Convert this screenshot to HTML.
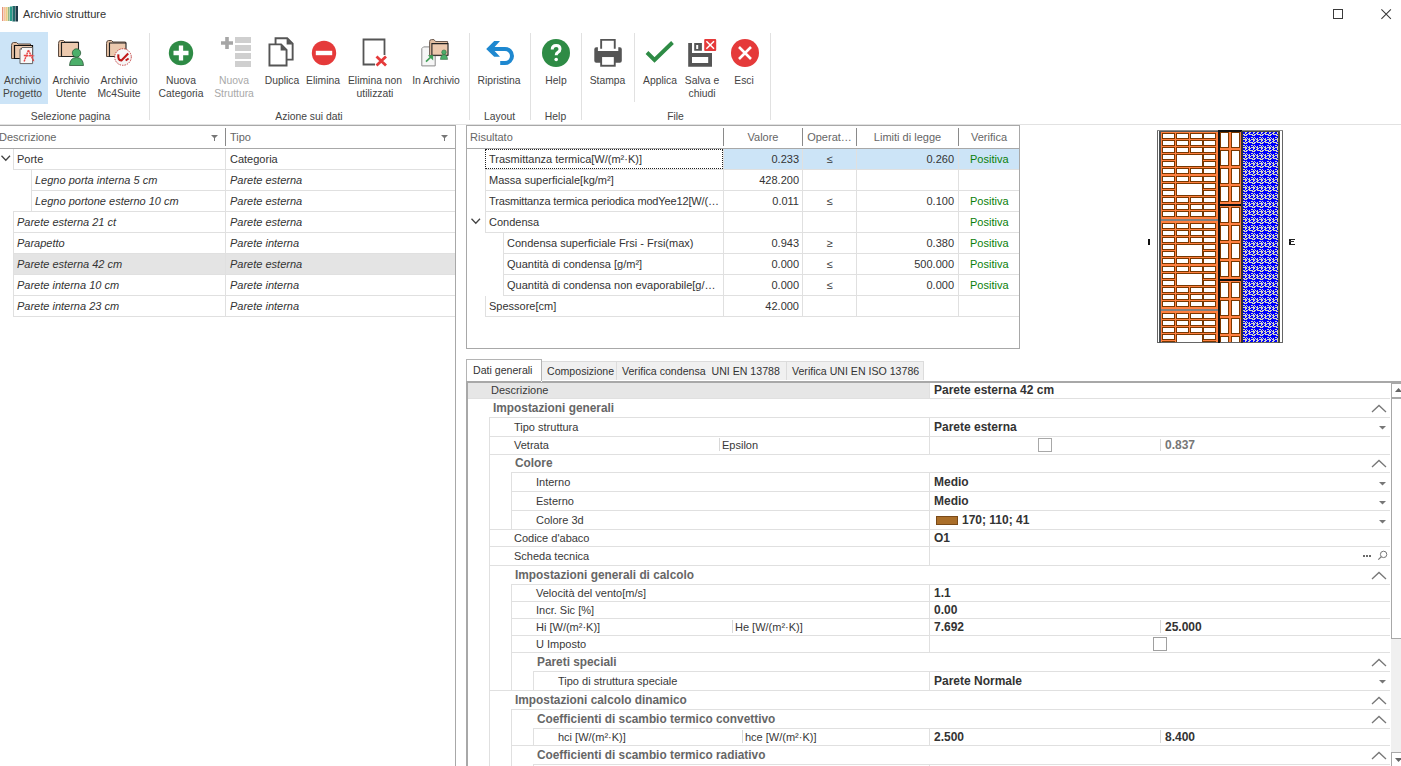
<!DOCTYPE html>
<html><head><meta charset="utf-8">
<style>
*{box-sizing:border-box;margin:0;padding:0}
html,body{width:1401px;height:766px;overflow:hidden;background:#fff}
body{position:relative;font-family:"Liberation Sans",sans-serif;font-size:11px;color:#333}
.a{position:absolute;white-space:nowrap}
.hl{position:absolute;height:1px}
.vl{position:absolute;width:1px}
.rb{position:absolute;text-align:center;line-height:13px;color:#444;transform:scaleX(0.94)}
.grp{position:absolute;text-align:center;color:#444;top:110px;line-height:13px;transform:scaleX(0.94)}
.sep{position:absolute;width:1px;background:#e1e1e1;top:33px}
</style></head><body>

<!-- TITLE BAR -->
<svg class="a" style="left:0px;top:0px" width="20" height="24" viewBox="0 0 20 24">
<rect x="2" y="7" width="1.4" height="14" fill="#e08060" opacity="0.85"/>
<rect x="4.2" y="7" width="1.4" height="14" fill="#f0a868" opacity="0.85"/>
<rect x="6" y="7" width="1.7" height="14" fill="#e8c878" opacity="0.9"/>
<rect x="8.1" y="7" width="1.4" height="14" fill="#88b078"/>
<rect x="9.9" y="6.5" width="2.1" height="14.5" fill="#2a9a88"/>
<rect x="12.4" y="6" width="2.6" height="15.5" fill="#1f6868"/>
<rect x="15.4" y="6" width="2.6" height="15.5" fill="#1e3a48"/>
</svg>
<div class="a" style="left:23px;top:8px;font-size:11.1px;color:#333">Archivio strutture</div>
<div class="a" style="left:1333px;top:9px;width:10px;height:10px;border:1px solid #3a3a3a"></div>
<svg class="a" style="left:1381px;top:9px" width="11" height="11"><path d="M0.4 0.4L9.9 9.9M9.9 0.4L0.4 9.9" stroke="#3a3a3a" stroke-width="1.05"/></svg>


<!-- RIBBON -->
<div class="a" style="left:0;top:32px;width:48px;height:72px;background:#cce4f7"></div>
<!-- Archivio Progetto icon -->
<svg class="a" style="left:10px;top:40px" width="26" height="26" viewBox="0 0 26 26">
<path d="M1.5 5.5 Q1.5 2.5 3.5 2.5 H6.5 L8 4 H20.5 V18.5 H1.5Z" fill="#e3bfa2" stroke="#5a4a40" stroke-width="1"/>
<path d="M4.5 5.5 H22.5 V18.5 H4.5Z" fill="#ecc9ae" stroke="#111" stroke-width="1.2"/>
<path d="M12 7.5 H22.6 V23.6 H10 V9.5Z" fill="#f8f8f8" stroke="#666" stroke-width="1"/><path d="M10 9.5 L12 7.5 V9.5Z" fill="#555"/>
<path d="M18.4 10.2 L14.1 21.5 M18.4 10.2 L23.9 21.5 M13.8 15.5 L24.2 15.8" stroke="#e84848" stroke-width="1.5" stroke-dasharray="2 0.5" fill="none"/>
</svg>
<!-- Archivio Utente icon -->
<svg class="a" style="left:57px;top:39px" width="28" height="28" viewBox="0 0 28 28">
<path d="M1.5 4.5 Q1.5 1.5 3.5 1.5 H6.5 L8 3 H21.5 V17.5 H1.5Z" fill="#e3bfa2" stroke="#5a4a40" stroke-width="1"/>
<path d="M4.5 3.5 H21.5 V17.5 H4.5Z" fill="#ecc9ae" stroke="#222" stroke-width="1.1"/>
<circle cx="19.5" cy="14" r="4.2" fill="#4caf6a" stroke="#2d5a3a" stroke-width="0.8"/>
<path d="M12.5 26.5 Q13 18.5 19.5 18.5 Q26 18.5 26.5 26.5Z" fill="#4caf6a" stroke="#2d5a3a" stroke-width="0.8"/>
</svg>
<!-- Mc4Suite icon -->
<svg class="a" style="left:105px;top:39px" width="28" height="28" viewBox="0 0 28 28">
<path d="M1.5 4.5 Q1.5 1.5 3.5 1.5 H6.5 L8 3 H20.5 V17.5 H1.5Z" fill="#e3bfa2" stroke="#5a4a40" stroke-width="1"/>
<path d="M4.5 4 H21 V17.5 H4.5Z" fill="#ecc9ae" stroke="#222" stroke-width="1.1"/>
<circle cx="18" cy="18" r="8.3" fill="#f6f6f6" stroke="#c03030" stroke-width="0.9" stroke-dasharray="1.5 1"/>
<path d="M13.4 15.4 Q12.6 21.6 16.4 21.4 L23.2 14.6" stroke="#c01818" stroke-width="2.1" fill="none"/><path d="M20.6 21.6 L23.6 19.4" stroke="#c01818" stroke-width="1.9" fill="none"/>
</svg>
<div class="rb" style="left:-1px;top:74px;width:47px">Archivio<br>Progetto</div>
<div class="rb" style="left:48px;top:74px;width:46px">Archivio<br>Utente</div>
<div class="rb" style="left:94px;top:74px;width:50px">Archivio<br>Mc4Suite</div>
<div class="grp" style="left:0;width:141px">Selezione pagina</div>
<div class="sep" style="left:149px;height:87px"></div>

<!-- Nuova Categoria -->
<svg class="a" style="left:168px;top:40px" width="26" height="26" viewBox="0 0 26 26">
<circle cx="13" cy="13" r="12.2" fill="#2e8b45"/>
<path d="M13 5.5V20.5M5.5 13H20.5" stroke="#fff" stroke-width="4.3"/>
</svg>
<!-- Nuova Struttura -->
<svg class="a" style="left:220px;top:36px" width="33" height="32" viewBox="0 0 33 32">
<path d="M7 1V13M1 7H13" stroke="#a6a6a6" stroke-width="3.6"/>
<rect x="15" y="1" width="16" height="6" fill="#cfcfcf"/>
<rect x="15" y="9" width="16" height="6" fill="#cfcfcf"/>
<rect x="15" y="17" width="16" height="6" fill="#cfcfcf"/>
<rect x="15" y="25" width="16" height="6" fill="#cfcfcf"/>
</svg>
<!-- Duplica -->
<svg class="a" style="left:260px;top:34px" width="40" height="36" viewBox="0 0 40 36">
<path d="M15.55 4.25 H27.2 L32.65 9.7 V25.65 H15.55Z" fill="#fff" stroke="#555" stroke-width="1.9"/>
<path d="M26.6 4.25 V10.6 H32.65Z" fill="#555"/>
<path d="M9.45 10.35 H21.1 L26.55 15.8 V31.45 H9.45Z" fill="#fff" stroke="#555" stroke-width="1.9"/>
<path d="M20.6 10.35 V16.5 H26.55Z" fill="#555"/>
</svg>
<!-- Elimina -->
<svg class="a" style="left:311px;top:40px" width="26" height="26" viewBox="0 0 26 26">
<circle cx="13" cy="13" r="12.2" fill="#e53a3a"/>
<rect x="4.8" y="10.8" width="16.4" height="4.4" fill="#fff"/>
</svg>
<!-- Elimina non utilizzati -->
<svg class="a" style="left:362px;top:38px" width="27" height="30" viewBox="0 0 27 30">
<path d="M13 26.5H1.5V1.5H22.5V17" fill="none" stroke="#555" stroke-width="1.8"/>
<path d="M14.5 18.5L24 27.5M24 18.5L14.5 27.5" stroke="#e53a3a" stroke-width="2.8"/>
</svg>
<!-- In Archivio -->
<svg class="a" style="left:415px;top:34px" width="40" height="36" viewBox="0 0 40 36">
<path d="M8.5 12.9 H20.2 V31.9 H6.8 V14.6Z" fill="#f6f6f6" stroke="#8a8a8a" stroke-width="1"/>
<path d="M14.6 21.6 V7.5 Q14.6 5.6 16.5 5.6 H19 L20.5 7.5 H32.6 V21.6Z" fill="#e3bfa2" stroke="#6a5a50" stroke-width="1"/>
<path d="M16.9 9.6 H33 V21.3 H16.9Z" fill="#ecc9ae" stroke="#222" stroke-width="1.1"/>
<circle cx="29" cy="18.2" r="2.3" fill="#4caf6a" stroke="#2d5a3a" stroke-width="0.5"/>
<path d="M25.4 25.4 Q25.8 20.6 29 20.6 Q32.2 20.6 32.6 25.4Z" fill="#4caf6a" stroke="#2d5a3a" stroke-width="0.5"/>
<path d="M11 27.6 L16.8 22.2" stroke="#3e9e56" stroke-width="1.6"/>
<path d="M12.8 21.3 H18.2 V26.5Z" fill="#3e9e56"/>
</svg>
<div class="rb" style="left:156px;top:74px;width:50px">Nuova<br>Categoria</div>
<div class="rb" style="left:208px;top:74px;width:52px;color:#a8a8a8">Nuova<br>Struttura</div>
<div class="rb" style="left:262px;top:74px;width:40px">Duplica</div>
<div class="rb" style="left:304px;top:74px;width:38px">Elimina</div>
<div class="rb" style="left:344px;top:74px;width:62px">Elimina non<br>utilizzati</div>
<div class="rb" style="left:408px;top:74px;width:56px">In Archivio</div>
<div class="grp" style="left:149px;width:320px">Azione sui dati</div>
<div class="sep" style="left:469px;height:87px"></div>

<!-- Ripristina -->
<svg class="a" style="left:480px;top:36px" width="40" height="34" viewBox="0 0 40 34">
<path d="M6.2 13 L14.2 5.1 H20 L14.6 10.9 H25 A9 9 0 0 1 25 28.9 H20.2 V25.1 H25 A5 5 0 0 0 25 15.1 H14.6 L20 20.7 H14.2Z" fill="#1e88d0"/>
</svg>
<div class="rb" style="left:472px;top:74px;width:54px">Ripristina</div>
<div class="grp" style="left:469px;width:61px">Layout</div>
<div class="sep" style="left:530px;height:87px"></div>

<!-- Help -->
<svg class="a" style="left:542px;top:39px" width="28" height="28" viewBox="0 0 28 28">
<circle cx="14" cy="14" r="14" fill="#2e8b45"/>
<path d="M10.2 10.5 Q10.2 6.5 14.2 6.5 Q18 6.5 18 10 Q18 12.2 15.8 13.4 Q14.2 14.3 14.2 16.3" fill="none" stroke="#fff" stroke-width="3"/>
<circle cx="14.2" cy="20.5" r="1.8" fill="#fff"/>
</svg>
<div class="rb" style="left:534px;top:74px;width:44px">Help</div>
<div class="grp" style="left:530px;width:51px">Help</div>
<div class="sep" style="left:581px;height:87px"></div>

<!-- Stampa -->
<svg class="a" style="left:588px;top:34px" width="40" height="36" viewBox="0 0 40 36">
<path d="M13.15 14.7 V5.85 H26.75 V14.7" fill="none" stroke="#555" stroke-width="1.9"/>
<path d="M8.3 13.2 Q6.3 13.2 6.3 15.2 V26.7 Q6.3 28.7 8.3 28.7 H31.8 Q33.8 28.7 33.8 26.7 V15.2 Q33.8 13.2 31.8 13.2 H30.3 V17.1 H9.9 V13.2Z" fill="#555"/>
<rect x="13.15" y="22.1" width="13.6" height="9.65" fill="#fff" stroke="#555" stroke-width="1.9"/>
</svg>
<div class="rb" style="left:585px;top:74px;width:45px">Stampa</div>
<div class="sep" style="left:634px;height:69px"></div>
<!-- Applica -->
<svg class="a" style="left:645px;top:40px" width="30" height="24" viewBox="0 0 30 24">
<path d="M2 12.5 L9.5 20 L27.5 2.5" fill="none" stroke="#2e8b45" stroke-width="3.9"/>
</svg>
<!-- Salva e chiudi -->
<svg class="a" style="left:684px;top:36px" width="36" height="34" viewBox="0 0 36 34">
<path d="M4.2 6.9 H8 V17.1 H28 V30.8 H4.2Z M8 21 V26.9 H24.2 V21Z" fill="#555" fill-rule="evenodd"/>
<path d="M10.2 6.9 H17.9 V14.7 H10.2Z M12.2 9 V13 H14.2 V9Z" fill="#555" fill-rule="evenodd"/>
<rect x="20.2" y="2.9" width="12" height="12.1" rx="1" fill="#e53a3a"/>
<path d="M22.4 5.3 L30 12.7 M30 5.3 L22.4 12.7" stroke="#fff" stroke-width="1.5"/>
</svg>
<!-- Esci -->
<svg class="a" style="left:731px;top:39px" width="28" height="28" viewBox="0 0 28 28">
<circle cx="14" cy="14" r="14" fill="#e53a3a"/>
<path d="M8 8 L20 20 M20 8 L8 20" stroke="#fff" stroke-width="2.6"/>
</svg>
<div class="rb" style="left:638px;top:74px;width:44px">Applica</div>
<div class="rb" style="left:682px;top:74px;width:40px">Salva e<br>chiudi</div>
<div class="rb" style="left:724px;top:74px;width:40px">Esci</div>
<div class="grp" style="left:581px;width:189px">File</div>
<div class="sep" style="left:770px;height:87px"></div>
<div class="hl" style="left:0;top:124px;width:1401px;background:#e2e2e2"></div>


<!-- LEFT GRID -->
<div class="hl" style="left:0;top:125px;width:456px;background:#a8a8a8"></div>
<div class="vl" style="left:455px;top:125px;height:641px;background:#a8a8a8"></div>
<div class="hl" style="left:0;top:148px;width:455px;background:#a8a8a8"></div>
<div class="vl" style="left:225px;top:128px;height:18px;background:#8a8a8a"></div>
<div class="a" style="left:-1px;top:131px;color:#666">Descrizione</div>
<div class="a" style="left:230px;top:131px;color:#666">Tipo</div>
<svg class="a" style="left:211px;top:135px" width="7" height="6"><path d="M0 0H7L4 3V6H3V3Z" fill="#777"/></svg>
<svg class="a" style="left:441px;top:135px" width="7" height="6"><path d="M0 0H7L4 3V6H3V3Z" fill="#777"/></svg>
<div class="a" style="left:14px;top:254px;width:441px;height:20px;background:#e4e4e4"></div>
<svg class="a" style="left:1px;top:155px" width="10" height="7"><path d="M0.5 0.8L4.8 5.2L9 0.8" fill="none" stroke="#444" stroke-width="1.3"/></svg>
<div class="hl" style="left:13px;top:169px;width:442px;background:#e0e0e0"></div>
<div class="hl" style="left:31px;top:190px;width:424px;background:#e0e0e0"></div>
<div class="hl" style="left:13px;top:211px;width:442px;background:#e0e0e0"></div>
<div class="hl" style="left:13px;top:232px;width:442px;background:#e0e0e0"></div>
<div class="hl" style="left:13px;top:253px;width:442px;background:#e0e0e0"></div>
<div class="hl" style="left:13px;top:274px;width:442px;background:#e0e0e0"></div>
<div class="hl" style="left:13px;top:295px;width:442px;background:#e0e0e0"></div>
<div class="hl" style="left:13px;top:316px;width:442px;background:#e0e0e0"></div>
<div class="vl" style="left:13px;top:149px;height:20px;background:#e0e0e0"></div>
<div class="vl" style="left:31px;top:170px;height:41px;background:#e0e0e0"></div>
<div class="vl" style="left:13px;top:212px;height:104px;background:#e0e0e0"></div>
<div class="vl" style="left:225px;top:149px;height:167px;background:#e0e0e0"></div>
<div class="a" style="left:17px;top:153px;color:#333">Porte</div>
<div class="a" style="left:230px;top:153px;color:#333">Categoria</div>
<div class="a" style="left:35px;top:174px;color:#333;font-style:italic">Legno porta interna 5 cm</div>
<div class="a" style="left:230px;top:174px;color:#333;font-style:italic">Parete esterna</div>
<div class="a" style="left:35px;top:195px;color:#333;font-style:italic">Legno portone esterno 10 cm</div>
<div class="a" style="left:230px;top:195px;color:#333;font-style:italic">Parete esterna</div>
<div class="a" style="left:17px;top:216px;color:#333;font-style:italic">Parete esterna 21 ct</div>
<div class="a" style="left:230px;top:216px;color:#333;font-style:italic">Parete esterna</div>
<div class="a" style="left:17px;top:237px;color:#333;font-style:italic">Parapetto</div>
<div class="a" style="left:230px;top:237px;color:#333;font-style:italic">Parete interna</div>
<div class="a" style="left:17px;top:258px;color:#333;font-style:italic">Parete esterna 42 cm</div>
<div class="a" style="left:230px;top:258px;color:#333;font-style:italic">Parete esterna</div>
<div class="a" style="left:17px;top:279px;color:#333;font-style:italic">Parete interna 10 cm</div>
<div class="a" style="left:230px;top:279px;color:#333;font-style:italic">Parete interna</div>
<div class="a" style="left:17px;top:300px;color:#333;font-style:italic">Parete interna 23 cm</div>
<div class="a" style="left:230px;top:300px;color:#333;font-style:italic">Parete interna</div>


<!-- RESULT GRID -->
<div class="hl" style="left:466px;top:125px;width:554px;background:#a8a8a8"></div>
<div class="hl" style="left:466px;top:348px;width:554px;background:#a8a8a8"></div>
<div class="vl" style="left:466px;top:125px;height:224px;background:#a8a8a8"></div>
<div class="vl" style="left:1019px;top:125px;height:224px;background:#a8a8a8"></div>
<div class="hl" style="left:467px;top:148px;width:552px;background:#a8a8a8"></div>
<div class="vl" style="left:723px;top:128px;height:18px;background:#8a8a8a"></div>
<div class="vl" style="left:802px;top:128px;height:18px;background:#8a8a8a"></div>
<div class="vl" style="left:856px;top:128px;height:18px;background:#8a8a8a"></div>
<div class="vl" style="left:958px;top:128px;height:18px;background:#8a8a8a"></div>
<div class="a" style="left:470px;top:131px;color:#666">Risultato</div>
<div class="a" style="left:724px;top:131px;width:78px;text-align:center;color:#666">Valore</div>
<div class="a" style="left:803px;top:131px;width:53px;text-align:center;color:#666">Operat…</div>
<div class="a" style="left:857px;top:131px;width:101px;text-align:center;color:#666">Limiti di legge</div>
<div class="a" style="left:959px;top:131px;width:60px;text-align:center;color:#666">Verifica</div>
<div class="a" style="left:724px;top:149px;width:295px;height:20px;background:#cce4f7"></div>
<div class="a" style="left:485px;top:149px;width:238px;height:20px;border:1px dotted #222"></div>
<div class="hl" style="left:485px;top:169px;width:534px;background:#e0e0e0"></div>
<div class="vl" style="left:723px;top:149px;height:20px;background:#e0e0e0"></div>
<div class="vl" style="left:802px;top:149px;height:20px;background:#e0e0e0"></div>
<div class="vl" style="left:856px;top:149px;height:20px;background:#e0e0e0"></div>
<div class="vl" style="left:958px;top:149px;height:20px;background:#e0e0e0"></div>
<div class="a" style="left:489px;top:153px;color:#333">Trasmittanza termica[W/(m²·K)]</div>
<div class="a" style="left:724px;top:153px;width:75px;text-align:right;color:#333">0.233</div>
<div class="a" style="left:803px;top:153px;width:53px;text-align:center;color:#333">≤</div>
<div class="a" style="left:857px;top:153px;width:97px;text-align:right;color:#333">0.260</div>
<div class="a" style="left:970px;top:153px;color:#0a800a">Positiva</div>
<div class="hl" style="left:485px;top:190px;width:534px;background:#e0e0e0"></div>
<div class="vl" style="left:485px;top:170px;height:20px;background:#e0e0e0"></div>
<div class="vl" style="left:723px;top:170px;height:20px;background:#e0e0e0"></div>
<div class="vl" style="left:802px;top:170px;height:20px;background:#e0e0e0"></div>
<div class="vl" style="left:856px;top:170px;height:20px;background:#e0e0e0"></div>
<div class="vl" style="left:958px;top:170px;height:20px;background:#e0e0e0"></div>
<div class="a" style="left:489px;top:174px;color:#333">Massa superficiale[kg/m²]</div>
<div class="a" style="left:724px;top:174px;width:75px;text-align:right;color:#333">428.200</div>
<div class="hl" style="left:485px;top:211px;width:534px;background:#e0e0e0"></div>
<div class="vl" style="left:485px;top:191px;height:20px;background:#e0e0e0"></div>
<div class="vl" style="left:723px;top:191px;height:20px;background:#e0e0e0"></div>
<div class="vl" style="left:802px;top:191px;height:20px;background:#e0e0e0"></div>
<div class="vl" style="left:856px;top:191px;height:20px;background:#e0e0e0"></div>
<div class="vl" style="left:958px;top:191px;height:20px;background:#e0e0e0"></div>
<div class="a" style="left:489px;top:195px;color:#333;letter-spacing:-0.15px">Trasmittanza termica periodica modYee12[W/(…</div>
<div class="a" style="left:724px;top:195px;width:75px;text-align:right;color:#333">0.011</div>
<div class="a" style="left:803px;top:195px;width:53px;text-align:center;color:#333">≤</div>
<div class="a" style="left:857px;top:195px;width:97px;text-align:right;color:#333">0.100</div>
<div class="a" style="left:970px;top:195px;color:#0a800a">Positiva</div>
<div class="hl" style="left:485px;top:232px;width:534px;background:#e0e0e0"></div>
<div class="vl" style="left:485px;top:212px;height:20px;background:#e0e0e0"></div>
<div class="vl" style="left:723px;top:212px;height:20px;background:#e0e0e0"></div>
<div class="vl" style="left:802px;top:212px;height:20px;background:#e0e0e0"></div>
<div class="vl" style="left:856px;top:212px;height:20px;background:#e0e0e0"></div>
<div class="vl" style="left:958px;top:212px;height:20px;background:#e0e0e0"></div>
<div class="a" style="left:489px;top:216px;color:#333">Condensa</div>
<div class="a" style="left:970px;top:216px;color:#0a800a">Positiva</div>
<svg class="a" style="left:471px;top:218px" width="10" height="7"><path d="M0.5 0.8L4.8 5.2L9 0.8" fill="none" stroke="#444" stroke-width="1.3"/></svg>
<div class="hl" style="left:503px;top:253px;width:516px;background:#e0e0e0"></div>
<div class="vl" style="left:503px;top:233px;height:20px;background:#e0e0e0"></div>
<div class="vl" style="left:723px;top:233px;height:20px;background:#e0e0e0"></div>
<div class="vl" style="left:802px;top:233px;height:20px;background:#e0e0e0"></div>
<div class="vl" style="left:856px;top:233px;height:20px;background:#e0e0e0"></div>
<div class="vl" style="left:958px;top:233px;height:20px;background:#e0e0e0"></div>
<div class="a" style="left:507px;top:237px;color:#333">Condensa superficiale Frsi - Frsi(max)</div>
<div class="a" style="left:724px;top:237px;width:75px;text-align:right;color:#333">0.943</div>
<div class="a" style="left:803px;top:237px;width:53px;text-align:center;color:#333">≥</div>
<div class="a" style="left:857px;top:237px;width:97px;text-align:right;color:#333">0.380</div>
<div class="a" style="left:970px;top:237px;color:#0a800a">Positiva</div>
<div class="hl" style="left:503px;top:274px;width:516px;background:#e0e0e0"></div>
<div class="vl" style="left:503px;top:254px;height:20px;background:#e0e0e0"></div>
<div class="vl" style="left:723px;top:254px;height:20px;background:#e0e0e0"></div>
<div class="vl" style="left:802px;top:254px;height:20px;background:#e0e0e0"></div>
<div class="vl" style="left:856px;top:254px;height:20px;background:#e0e0e0"></div>
<div class="vl" style="left:958px;top:254px;height:20px;background:#e0e0e0"></div>
<div class="a" style="left:507px;top:258px;color:#333">Quantità di condensa [g/m²]</div>
<div class="a" style="left:724px;top:258px;width:75px;text-align:right;color:#333">0.000</div>
<div class="a" style="left:803px;top:258px;width:53px;text-align:center;color:#333">≤</div>
<div class="a" style="left:857px;top:258px;width:97px;text-align:right;color:#333">500.000</div>
<div class="a" style="left:970px;top:258px;color:#0a800a">Positiva</div>
<div class="hl" style="left:503px;top:295px;width:516px;background:#e0e0e0"></div>
<div class="vl" style="left:503px;top:275px;height:20px;background:#e0e0e0"></div>
<div class="vl" style="left:723px;top:275px;height:20px;background:#e0e0e0"></div>
<div class="vl" style="left:802px;top:275px;height:20px;background:#e0e0e0"></div>
<div class="vl" style="left:856px;top:275px;height:20px;background:#e0e0e0"></div>
<div class="vl" style="left:958px;top:275px;height:20px;background:#e0e0e0"></div>
<div class="a" style="left:507px;top:279px;color:#333">Quantità di condensa non evaporabile[g/…</div>
<div class="a" style="left:724px;top:279px;width:75px;text-align:right;color:#333">0.000</div>
<div class="a" style="left:803px;top:279px;width:53px;text-align:center;color:#333">≤</div>
<div class="a" style="left:857px;top:279px;width:97px;text-align:right;color:#333">0.000</div>
<div class="a" style="left:970px;top:279px;color:#0a800a">Positiva</div>
<div class="hl" style="left:485px;top:316px;width:534px;background:#e0e0e0"></div>
<div class="vl" style="left:485px;top:296px;height:20px;background:#e0e0e0"></div>
<div class="vl" style="left:723px;top:296px;height:20px;background:#e0e0e0"></div>
<div class="vl" style="left:802px;top:296px;height:20px;background:#e0e0e0"></div>
<div class="vl" style="left:856px;top:296px;height:20px;background:#e0e0e0"></div>
<div class="vl" style="left:958px;top:296px;height:20px;background:#e0e0e0"></div>
<div class="a" style="left:489px;top:300px;color:#333">Spessore[cm]</div>
<div class="a" style="left:724px;top:300px;width:75px;text-align:right;color:#333">42.000</div>

<!-- WALL -->
<svg class="a" style="left:1140px;top:125px" width="160" height="225" viewBox="1140 125 160 225" shape-rendering="crispEdges">
<defs><pattern id="ins" x="1243" y="133" width="8" height="8" patternUnits="userSpaceOnUse"><rect width="8" height="8" fill="#0000ff"/><rect x="2" y="0" width="1" height="1" fill="#d6d6c2"/><rect x="5" y="0" width="1" height="1" fill="#d6d6c2"/><rect x="6" y="0" width="1" height="1" fill="#d6d6c2"/><rect x="0" y="1" width="1" height="1" fill="#d6d6c2"/><rect x="1" y="1" width="1" height="1" fill="#d6d6c2"/><rect x="3" y="1" width="1" height="1" fill="#d6d6c2"/><rect x="4" y="1" width="1" height="1" fill="#d6d6c2"/><rect x="6" y="1" width="1" height="1" fill="#d6d6c2"/><rect x="7" y="1" width="1" height="1" fill="#d6d6c2"/><rect x="1" y="2" width="1" height="1" fill="#d6d6c2"/><rect x="2" y="2" width="1" height="1" fill="#d6d6c2"/><rect x="3" y="2" width="1" height="1" fill="#d6d6c2"/><rect x="0" y="4" width="1" height="1" fill="#d6d6c2"/><rect x="1" y="4" width="1" height="1" fill="#d6d6c2"/><rect x="3" y="4" width="1" height="1" fill="#d6d6c2"/><rect x="2" y="5" width="1" height="1" fill="#d6d6c2"/><rect x="4" y="5" width="1" height="1" fill="#d6d6c2"/><rect x="6" y="5" width="1" height="1" fill="#d6d6c2"/><rect x="0" y="6" width="1" height="1" fill="#d6d6c2"/><rect x="1" y="6" width="1" height="1" fill="#d6d6c2"/><rect x="2" y="6" width="1" height="1" fill="#d6d6c2"/><rect x="3" y="6" width="1" height="1" fill="#d6d6c2"/><rect x="5" y="6" width="1" height="1" fill="#d6d6c2"/><rect x="6" y="6" width="1" height="1" fill="#d6d6c2"/><rect x="2" y="7" width="1" height="1" fill="#d6d6c2"/><rect x="3" y="7" width="1" height="1" fill="#d6d6c2"/><rect x="6" y="7" width="1" height="1" fill="#d6d6c2"/><rect x="7" y="7" width="1" height="1" fill="#d6d6c2"/></pattern></defs>
<rect x="1157" y="131" width="126" height="212" fill="#fff"/>
<rect x="1157" y="131" width="1" height="212" fill="#666"/>
<rect x="1282" y="131" width="1" height="212" fill="#666"/>
<rect x="1157" y="342" width="126" height="1" fill="#666"/>
<rect x="1157" y="130" width="126" height="1" fill="#888"/>
<rect x="1159" y="131" width="2" height="212" fill="#4a5052"/>
<rect x="1159" y="131" width="60" height="1" fill="#555"/>
<clipPath id="cp1"><rect x="1161" y="132" width="57" height="210"/></clipPath><clipPath id="cp2"><rect x="1220" y="132" width="21" height="210"/></clipPath><rect x="1161" y="132" width="57" height="210" fill="#ff8040"/><g clip-path="url(#cp1)">
<rect x="1162.5" y="133.5" width="12" height="5" fill="#fff" stroke="#7a3800" stroke-width="1"/>
<rect x="1176.5" y="133.5" width="12" height="5" fill="#fff" stroke="#7a3800" stroke-width="1"/>
<rect x="1190.5" y="133.5" width="12" height="5" fill="#fff" stroke="#7a3800" stroke-width="1"/>
<rect x="1203.5" y="133.5" width="12" height="5" fill="#fff" stroke="#7a3800" stroke-width="1"/>
<rect x="1162.5" y="140.5" width="12" height="5" fill="#fff" stroke="#7a3800" stroke-width="1"/>
<rect x="1176.5" y="140.5" width="12" height="5" fill="#fff" stroke="#7a3800" stroke-width="1"/>
<rect x="1190.5" y="140.5" width="12" height="5" fill="#fff" stroke="#7a3800" stroke-width="1"/>
<rect x="1203.5" y="140.5" width="12" height="5" fill="#fff" stroke="#7a3800" stroke-width="1"/>
<rect x="1162.5" y="147.5" width="12" height="5" fill="#fff" stroke="#7a3800" stroke-width="1"/>
<rect x="1176.5" y="147.5" width="12" height="5" fill="#fff" stroke="#7a3800" stroke-width="1"/>
<rect x="1190.5" y="147.5" width="12" height="5" fill="#fff" stroke="#7a3800" stroke-width="1"/>
<rect x="1203.5" y="147.5" width="12" height="5" fill="#fff" stroke="#7a3800" stroke-width="1"/>
<rect x="1162.5" y="154.5" width="12" height="5" fill="#fff" stroke="#7a3800" stroke-width="1"/>
<rect x="1176.5" y="154.5" width="26" height="12" fill="#fff" stroke="#7a3800" stroke-width="1"/>
<rect x="1203.5" y="154.5" width="12" height="5" fill="#fff" stroke="#7a3800" stroke-width="1"/>
<rect x="1162.5" y="161.5" width="12" height="5" fill="#fff" stroke="#7a3800" stroke-width="1"/>
<rect x="1203.5" y="161.5" width="12" height="5" fill="#fff" stroke="#7a3800" stroke-width="1"/>
<rect x="1162.5" y="168.5" width="12" height="5" fill="#fff" stroke="#7a3800" stroke-width="1"/>
<rect x="1176.5" y="168.5" width="12" height="5" fill="#fff" stroke="#7a3800" stroke-width="1"/>
<rect x="1190.5" y="168.5" width="12" height="5" fill="#fff" stroke="#7a3800" stroke-width="1"/>
<rect x="1203.5" y="168.5" width="12" height="5" fill="#fff" stroke="#7a3800" stroke-width="1"/>
<rect x="1162.5" y="176.5" width="12" height="5" fill="#fff" stroke="#7a3800" stroke-width="1"/>
<rect x="1176.5" y="176.5" width="12" height="5" fill="#fff" stroke="#7a3800" stroke-width="1"/>
<rect x="1190.5" y="176.5" width="12" height="5" fill="#fff" stroke="#7a3800" stroke-width="1"/>
<rect x="1203.5" y="176.5" width="12" height="5" fill="#fff" stroke="#7a3800" stroke-width="1"/>
<rect x="1162.5" y="183.5" width="12" height="5" fill="#fff" stroke="#7a3800" stroke-width="1"/>
<rect x="1176.5" y="183.5" width="26" height="12" fill="#fff" stroke="#7a3800" stroke-width="1"/>
<rect x="1203.5" y="183.5" width="12" height="5" fill="#fff" stroke="#7a3800" stroke-width="1"/>
<rect x="1162.5" y="190.5" width="12" height="5" fill="#fff" stroke="#7a3800" stroke-width="1"/>
<rect x="1203.5" y="190.5" width="12" height="5" fill="#fff" stroke="#7a3800" stroke-width="1"/>
<rect x="1162.5" y="197.5" width="12" height="5" fill="#fff" stroke="#7a3800" stroke-width="1"/>
<rect x="1176.5" y="197.5" width="12" height="5" fill="#fff" stroke="#7a3800" stroke-width="1"/>
<rect x="1190.5" y="197.5" width="12" height="5" fill="#fff" stroke="#7a3800" stroke-width="1"/>
<rect x="1203.5" y="197.5" width="12" height="5" fill="#fff" stroke="#7a3800" stroke-width="1"/>
<rect x="1162.5" y="204.5" width="12" height="5" fill="#fff" stroke="#7a3800" stroke-width="1"/>
<rect x="1176.5" y="204.5" width="12" height="5" fill="#fff" stroke="#7a3800" stroke-width="1"/>
<rect x="1190.5" y="204.5" width="12" height="5" fill="#fff" stroke="#7a3800" stroke-width="1"/>
<rect x="1203.5" y="204.5" width="12" height="5" fill="#fff" stroke="#7a3800" stroke-width="1"/>
<rect x="1162.5" y="211.5" width="12" height="5" fill="#fff" stroke="#7a3800" stroke-width="1"/>
<rect x="1176.5" y="211.5" width="12" height="5" fill="#fff" stroke="#7a3800" stroke-width="1"/>
<rect x="1190.5" y="211.5" width="12" height="5" fill="#fff" stroke="#7a3800" stroke-width="1"/>
<rect x="1203.5" y="211.5" width="12" height="5" fill="#fff" stroke="#7a3800" stroke-width="1"/>
<rect x="1161" y="219" width="57" height="2" fill="#808080"/>
<rect x="1162.5" y="223.5" width="12" height="5" fill="#fff" stroke="#7a3800" stroke-width="1"/>
<rect x="1176.5" y="223.5" width="12" height="5" fill="#fff" stroke="#7a3800" stroke-width="1"/>
<rect x="1190.5" y="223.5" width="12" height="5" fill="#fff" stroke="#7a3800" stroke-width="1"/>
<rect x="1203.5" y="223.5" width="12" height="5" fill="#fff" stroke="#7a3800" stroke-width="1"/>
<rect x="1162.5" y="230.5" width="12" height="5" fill="#fff" stroke="#7a3800" stroke-width="1"/>
<rect x="1176.5" y="230.5" width="12" height="5" fill="#fff" stroke="#7a3800" stroke-width="1"/>
<rect x="1190.5" y="230.5" width="12" height="5" fill="#fff" stroke="#7a3800" stroke-width="1"/>
<rect x="1203.5" y="230.5" width="12" height="5" fill="#fff" stroke="#7a3800" stroke-width="1"/>
<rect x="1162.5" y="237.5" width="12" height="5" fill="#fff" stroke="#7a3800" stroke-width="1"/>
<rect x="1176.5" y="237.5" width="12" height="5" fill="#fff" stroke="#7a3800" stroke-width="1"/>
<rect x="1190.5" y="237.5" width="12" height="5" fill="#fff" stroke="#7a3800" stroke-width="1"/>
<rect x="1203.5" y="237.5" width="12" height="5" fill="#fff" stroke="#7a3800" stroke-width="1"/>
<rect x="1162.5" y="244.5" width="12" height="5" fill="#fff" stroke="#7a3800" stroke-width="1"/>
<rect x="1176.5" y="244.5" width="26" height="12" fill="#fff" stroke="#7a3800" stroke-width="1"/>
<rect x="1203.5" y="244.5" width="12" height="5" fill="#fff" stroke="#7a3800" stroke-width="1"/>
<rect x="1162.5" y="251.5" width="12" height="5" fill="#fff" stroke="#7a3800" stroke-width="1"/>
<rect x="1203.5" y="251.5" width="12" height="5" fill="#fff" stroke="#7a3800" stroke-width="1"/>
<rect x="1162.5" y="258.5" width="12" height="5" fill="#fff" stroke="#7a3800" stroke-width="1"/>
<rect x="1176.5" y="258.5" width="12" height="5" fill="#fff" stroke="#7a3800" stroke-width="1"/>
<rect x="1190.5" y="258.5" width="12" height="5" fill="#fff" stroke="#7a3800" stroke-width="1"/>
<rect x="1203.5" y="258.5" width="12" height="5" fill="#fff" stroke="#7a3800" stroke-width="1"/>
<rect x="1162.5" y="266.5" width="12" height="5" fill="#fff" stroke="#7a3800" stroke-width="1"/>
<rect x="1176.5" y="266.5" width="12" height="5" fill="#fff" stroke="#7a3800" stroke-width="1"/>
<rect x="1190.5" y="266.5" width="12" height="5" fill="#fff" stroke="#7a3800" stroke-width="1"/>
<rect x="1203.5" y="266.5" width="12" height="5" fill="#fff" stroke="#7a3800" stroke-width="1"/>
<rect x="1162.5" y="273.5" width="12" height="5" fill="#fff" stroke="#7a3800" stroke-width="1"/>
<rect x="1176.5" y="273.5" width="26" height="12" fill="#fff" stroke="#7a3800" stroke-width="1"/>
<rect x="1203.5" y="273.5" width="12" height="5" fill="#fff" stroke="#7a3800" stroke-width="1"/>
<rect x="1162.5" y="280.5" width="12" height="5" fill="#fff" stroke="#7a3800" stroke-width="1"/>
<rect x="1203.5" y="280.5" width="12" height="5" fill="#fff" stroke="#7a3800" stroke-width="1"/>
<rect x="1162.5" y="287.5" width="12" height="5" fill="#fff" stroke="#7a3800" stroke-width="1"/>
<rect x="1176.5" y="287.5" width="12" height="5" fill="#fff" stroke="#7a3800" stroke-width="1"/>
<rect x="1190.5" y="287.5" width="12" height="5" fill="#fff" stroke="#7a3800" stroke-width="1"/>
<rect x="1203.5" y="287.5" width="12" height="5" fill="#fff" stroke="#7a3800" stroke-width="1"/>
<rect x="1162.5" y="294.5" width="12" height="5" fill="#fff" stroke="#7a3800" stroke-width="1"/>
<rect x="1176.5" y="294.5" width="12" height="5" fill="#fff" stroke="#7a3800" stroke-width="1"/>
<rect x="1190.5" y="294.5" width="12" height="5" fill="#fff" stroke="#7a3800" stroke-width="1"/>
<rect x="1203.5" y="294.5" width="12" height="5" fill="#fff" stroke="#7a3800" stroke-width="1"/>
<rect x="1162.5" y="301.5" width="12" height="5" fill="#fff" stroke="#7a3800" stroke-width="1"/>
<rect x="1176.5" y="301.5" width="12" height="5" fill="#fff" stroke="#7a3800" stroke-width="1"/>
<rect x="1190.5" y="301.5" width="12" height="5" fill="#fff" stroke="#7a3800" stroke-width="1"/>
<rect x="1203.5" y="301.5" width="12" height="5" fill="#fff" stroke="#7a3800" stroke-width="1"/>
<rect x="1161" y="309" width="57" height="2" fill="#808080"/>
<rect x="1162.5" y="313.5" width="12" height="5" fill="#fff" stroke="#7a3800" stroke-width="1"/>
<rect x="1176.5" y="313.5" width="12" height="5" fill="#fff" stroke="#7a3800" stroke-width="1"/>
<rect x="1190.5" y="313.5" width="12" height="5" fill="#fff" stroke="#7a3800" stroke-width="1"/>
<rect x="1203.5" y="313.5" width="12" height="5" fill="#fff" stroke="#7a3800" stroke-width="1"/>
<rect x="1162.5" y="320.5" width="12" height="5" fill="#fff" stroke="#7a3800" stroke-width="1"/>
<rect x="1176.5" y="320.5" width="12" height="5" fill="#fff" stroke="#7a3800" stroke-width="1"/>
<rect x="1190.5" y="320.5" width="12" height="5" fill="#fff" stroke="#7a3800" stroke-width="1"/>
<rect x="1203.5" y="320.5" width="12" height="5" fill="#fff" stroke="#7a3800" stroke-width="1"/>
<rect x="1162.5" y="327.5" width="12" height="5" fill="#fff" stroke="#7a3800" stroke-width="1"/>
<rect x="1176.5" y="327.5" width="12" height="5" fill="#fff" stroke="#7a3800" stroke-width="1"/>
<rect x="1190.5" y="327.5" width="12" height="5" fill="#fff" stroke="#7a3800" stroke-width="1"/>
<rect x="1203.5" y="327.5" width="12" height="5" fill="#fff" stroke="#7a3800" stroke-width="1"/>
<rect x="1162.5" y="334.5" width="12" height="5" fill="#fff" stroke="#7a3800" stroke-width="1"/>
<rect x="1176.5" y="334.5" width="26" height="12" fill="#fff" stroke="#7a3800" stroke-width="1"/>
<rect x="1203.5" y="334.5" width="12" height="5" fill="#fff" stroke="#7a3800" stroke-width="1"/>
<rect x="1162.5" y="341.5" width="12" height="5" fill="#fff" stroke="#7a3800" stroke-width="1"/>
<rect x="1203.5" y="341.5" width="12" height="5" fill="#fff" stroke="#7a3800" stroke-width="1"/>
</g><rect x="1218" y="130" width="2" height="213" fill="#111"/>
<rect x="1218" y="130" width="24" height="2" fill="#111"/>
<rect x="1220" y="132" width="21" height="210" fill="#ff8040"/>
<rect x="1241" y="131" width="2" height="212" fill="#333"/><g clip-path="url(#cp2)"><rect x="1220.5" y="132.5" width="8" height="15" fill="#fff" stroke="#7a3800" stroke-width="1"/><rect x="1231.5" y="132.5" width="8" height="15" fill="#fff" stroke="#7a3800" stroke-width="1"/><rect x="1220.5" y="150.5" width="8" height="15" fill="#fff" stroke="#7a3800" stroke-width="1"/><rect x="1231.5" y="150.5" width="8" height="15" fill="#fff" stroke="#7a3800" stroke-width="1"/><rect x="1220.5" y="168.5" width="8" height="15" fill="#fff" stroke="#7a3800" stroke-width="1"/><rect x="1231.5" y="168.5" width="8" height="15" fill="#fff" stroke="#7a3800" stroke-width="1"/><rect x="1220.5" y="186.5" width="8" height="15" fill="#fff" stroke="#7a3800" stroke-width="1"/><rect x="1231.5" y="186.5" width="8" height="15" fill="#fff" stroke="#7a3800" stroke-width="1"/><rect x="1220" y="204" width="21" height="2" fill="#111"/><rect x="1220.5" y="207.5" width="8" height="15" fill="#fff" stroke="#7a3800" stroke-width="1"/><rect x="1231.5" y="207.5" width="8" height="15" fill="#fff" stroke="#7a3800" stroke-width="1"/><rect x="1220.5" y="225.5" width="8" height="15" fill="#fff" stroke="#7a3800" stroke-width="1"/><rect x="1231.5" y="225.5" width="8" height="15" fill="#fff" stroke="#7a3800" stroke-width="1"/><rect x="1220.5" y="243.5" width="8" height="15" fill="#fff" stroke="#7a3800" stroke-width="1"/><rect x="1231.5" y="243.5" width="8" height="15" fill="#fff" stroke="#7a3800" stroke-width="1"/><rect x="1220.5" y="261.5" width="8" height="15" fill="#fff" stroke="#7a3800" stroke-width="1"/><rect x="1231.5" y="261.5" width="8" height="15" fill="#fff" stroke="#7a3800" stroke-width="1"/><rect x="1220" y="279" width="21" height="2" fill="#111"/><rect x="1220.5" y="282.5" width="8" height="15" fill="#fff" stroke="#7a3800" stroke-width="1"/><rect x="1231.5" y="282.5" width="8" height="15" fill="#fff" stroke="#7a3800" stroke-width="1"/><rect x="1220.5" y="300.5" width="8" height="15" fill="#fff" stroke="#7a3800" stroke-width="1"/><rect x="1231.5" y="300.5" width="8" height="15" fill="#fff" stroke="#7a3800" stroke-width="1"/><rect x="1220.5" y="318.5" width="8" height="15" fill="#fff" stroke="#7a3800" stroke-width="1"/><rect x="1231.5" y="318.5" width="8" height="15" fill="#fff" stroke="#7a3800" stroke-width="1"/><rect x="1220.5" y="336.5" width="8" height="15" fill="#fff" stroke="#7a3800" stroke-width="1"/><rect x="1231.5" y="336.5" width="8" height="15" fill="#fff" stroke="#7a3800" stroke-width="1"/></g><rect x="1243" y="131" width="36" height="1" fill="#444"/>
<rect x="1243" y="132" width="35" height="210" fill="url(#ins)"/>
<rect x="1278" y="131" width="2" height="212" fill="#4a4a40"/>
<rect x="1280" y="131" width="2" height="211" fill="#fff"/>
<rect x="1148" y="239" width="2" height="6" fill="#111"/>
</svg>
<svg class="a" style="left:1289px;top:239px" width="7" height="7" shape-rendering="crispEdges"><rect x="0" y="0" width="2" height="6" fill="#111"/><rect x="0" y="0" width="6" height="1" fill="#222"/><rect x="0" y="2" width="5" height="1" fill="#333"/><rect x="0" y="5" width="6" height="1" fill="#222"/></svg>

<!-- TABS -->
<style>.tab{position:absolute;top:361px;height:19px;background:#f0f0f0;border:1px solid #dcdcdc;border-bottom:none;font-size:10.6px;color:#333;line-height:19px;padding-left:5px;white-space:nowrap}.pl{position:absolute;white-space:nowrap;color:#383838;font-size:11px}.pc{position:absolute;white-space:nowrap;color:#666;font-size:11.85px;font-weight:bold}.pv{position:absolute;white-space:nowrap;color:#333;font-size:12px;font-weight:bold}.rl{position:absolute;height:1px;background:#e0e0e0}.vv{position:absolute;width:1px;background:#e0e0e0}</style>
<div class="tab" style="left:541px;width:76px">Composizione</div>
<div class="tab" style="left:616px;width:171px">Verifica condensa&nbsp; UNI EN 13788</div>
<div class="tab" style="left:786px;width:138px">Verifica UNI EN ISO 13786</div>
<div class="a" style="left:466px;top:359px;width:76px;height:23px;background:#fff;border:1px solid #b4b4b4;border-bottom:none;font-size:10.6px;color:#333;line-height:20px;padding-left:6px">Dati generali</div>
<div class="a" style="left:466px;top:381px;width:935px;height:2px;background:#a8a8a8"></div>
<div class="a" style="left:541px;top:381px;width:1px;height:1px;background:#fff"></div>
<div class="a" style="left:466px;top:381px;width:2px;height:385px;background:#a8a8a8"></div>
<div class="a" style="left:468px;top:383px;width:461px;height:15px;background:#e6e6e6"></div>
<div class="pl" style="left:491px;top:384px">Descrizione</div>
<div class="pv" style="left:934px;top:383px">Parete esterna 42 cm</div>
<div class="rl" style="left:468px;top:398px;width:922px"></div>
<div class="rl" style="left:489px;top:417px;width:901px"></div>
<div class="rl" style="left:489px;top:436px;width:901px"></div>
<div class="rl" style="left:489px;top:454px;width:901px"></div>
<div class="rl" style="left:511px;top:472px;width:879px"></div>
<div class="rl" style="left:511px;top:491px;width:879px"></div>
<div class="rl" style="left:511px;top:510px;width:879px"></div>
<div class="rl" style="left:489px;top:529px;width:901px"></div>
<div class="rl" style="left:489px;top:546px;width:901px"></div>
<div class="rl" style="left:489px;top:565px;width:901px"></div>
<div class="rl" style="left:511px;top:584px;width:879px"></div>
<div class="rl" style="left:511px;top:601px;width:879px"></div>
<div class="rl" style="left:511px;top:618px;width:879px"></div>
<div class="rl" style="left:511px;top:635px;width:879px"></div>
<div class="rl" style="left:511px;top:652px;width:879px"></div>
<div class="rl" style="left:533px;top:671px;width:857px"></div>
<div class="rl" style="left:489px;top:690px;width:901px"></div>
<div class="rl" style="left:511px;top:709px;width:879px"></div>
<div class="rl" style="left:533px;top:728px;width:857px"></div>
<div class="rl" style="left:511px;top:745px;width:879px"></div>
<div class="rl" style="left:533px;top:764px;width:857px"></div>
<div class="vv" style="left:489px;top:417px;height:349px"></div>
<div class="vv" style="left:511px;top:472px;height:57px"></div>
<div class="vv" style="left:511px;top:584px;height:106px"></div>
<div class="vv" style="left:511px;top:709px;height:57px"></div>
<div class="vv" style="left:533px;top:671px;height:19px"></div>
<div class="vv" style="left:533px;top:728px;height:17px"></div>
<div class="vv" style="left:533px;top:764px;height:2px"></div>
<div class="vv" style="left:929px;top:383px;height:15px"></div>
<div class="vv" style="left:929px;top:417px;height:37px"></div>
<div class="vv" style="left:929px;top:472px;height:93px"></div>
<div class="vv" style="left:929px;top:584px;height:68px"></div>
<div class="vv" style="left:929px;top:671px;height:19px"></div>
<div class="vv" style="left:929px;top:728px;height:17px"></div>
<div class="vv" style="left:929px;top:764px;height:2px"></div>
<div class="pc" style="left:493px;top:401px">Impostazioni generali</div>
<svg class="a" style="left:1371px;top:404px" width="16" height="9"><path d="M1 8L8 1.5L15 8" fill="none" stroke="#777" stroke-width="1.3"/></svg>
<div class="pl" style="left:514px;top:421px">Tipo struttura</div>
<div class="pv" style="left:934px;top:420px">Parete esterna</div>
<svg class="a" style="left:1379px;top:426px" width="7" height="4"><path d="M0 0H7L3.5 3.5Z" fill="#777"/></svg>
<div class="pl" style="left:514px;top:439px">Vetrata</div>
<div class="vv" style="left:719px;top:438px;height:13px;background:#d8d8d8"></div>
<div class="pl" style="left:722px;top:439px">Epsilon</div>
<div class="a" style="left:1038px;top:438px;width:14px;height:14px;border:1px solid #a8a8a8;background:#fff"></div>
<div class="vv" style="left:1160px;top:439px;height:12px;background:#d8d8d8"></div>
<div class="pv" style="left:1165px;top:438px;color:#777">0.837</div>
<div class="pc" style="left:515px;top:456px">Colore</div>
<svg class="a" style="left:1371px;top:459px" width="16" height="9"><path d="M1 8L8 1.5L15 8" fill="none" stroke="#777" stroke-width="1.3"/></svg>
<div class="pl" style="left:536px;top:476px">Interno</div>
<div class="pv" style="left:934px;top:475px">Medio</div>
<svg class="a" style="left:1379px;top:482px" width="7" height="4"><path d="M0 0H7L3.5 3.5Z" fill="#777"/></svg>
<div class="pl" style="left:536px;top:495px">Esterno</div>
<div class="pv" style="left:934px;top:494px">Medio</div>
<svg class="a" style="left:1379px;top:501px" width="7" height="4"><path d="M0 0H7L3.5 3.5Z" fill="#777"/></svg>
<div class="pl" style="left:536px;top:514px">Colore 3d</div>
<div class="a" style="left:936px;top:516px;width:22px;height:9px;background:#aa6e29;border:1px solid #7a4a18"></div>
<div class="pv" style="left:962px;top:513px">170; 110; 41</div>
<svg class="a" style="left:1379px;top:520px" width="7" height="4"><path d="M0 0H7L3.5 3.5Z" fill="#777"/></svg>
<div class="pl" style="left:514px;top:532px">Codice d'abaco</div>
<div class="pv" style="left:934px;top:531px">O1</div>
<div class="pl" style="left:514px;top:550px">Scheda tecnica</div>
<svg class="a" style="left:1362px;top:549px" width="26" height="12"><rect x="1" y="6" width="2" height="2" fill="#6a6a6a"/><rect x="4" y="6" width="2" height="2" fill="#6a6a6a"/><rect x="7" y="6" width="2" height="2" fill="#6a6a6a"/><circle cx="21.6" cy="5.4" r="3.2" fill="none" stroke="#777" stroke-width="1"/><path d="M19.4 7.6L16.3 10.6" stroke="#777" stroke-width="1.3"/></svg>
<div class="pc" style="left:515px;top:568px">Impostazioni generali di calcolo</div>
<svg class="a" style="left:1371px;top:571px" width="16" height="9"><path d="M1 8L8 1.5L15 8" fill="none" stroke="#777" stroke-width="1.3"/></svg>
<div class="pl" style="left:536px;top:587px">Velocità del vento[m/s]</div>
<div class="pv" style="left:934px;top:586px">1.1</div>
<div class="pl" style="left:536px;top:604px">Incr. Sic [%]</div>
<div class="pv" style="left:934px;top:603px">0.00</div>
<div class="pl" style="left:536px;top:621px">Hi [W/(m²·K)]</div>
<div class="vv" style="left:732px;top:620px;height:13px;background:#d8d8d8"></div>
<div class="pl" style="left:735px;top:621px">He [W/(m²·K)]</div>
<div class="pv" style="left:934px;top:620px">7.692</div>
<div class="vv" style="left:1160px;top:620px;height:13px;background:#d8d8d8"></div>
<div class="pv" style="left:1165px;top:620px">25.000</div>
<div class="pl" style="left:536px;top:638px">U Imposto</div>
<div class="a" style="left:1153px;top:637px;width:14px;height:14px;border:1px solid #a0a0a0;background:#fff"></div>
<div class="pc" style="left:537px;top:655px">Pareti speciali</div>
<svg class="a" style="left:1371px;top:658px" width="16" height="9"><path d="M1 8L8 1.5L15 8" fill="none" stroke="#777" stroke-width="1.3"/></svg>
<div class="pl" style="left:558px;top:675px">Tipo di struttura speciale</div>
<div class="pv" style="left:934px;top:674px">Parete Normale</div>
<svg class="a" style="left:1379px;top:680px" width="7" height="4"><path d="M0 0H7L3.5 3.5Z" fill="#777"/></svg>
<div class="pc" style="left:515px;top:693px">Impostazioni calcolo dinamico</div>
<svg class="a" style="left:1371px;top:696px" width="16" height="9"><path d="M1 8L8 1.5L15 8" fill="none" stroke="#777" stroke-width="1.3"/></svg>
<div class="pc" style="left:537px;top:712px">Coefficienti di scambio termico convettivo</div>
<svg class="a" style="left:1371px;top:715px" width="16" height="9"><path d="M1 8L8 1.5L15 8" fill="none" stroke="#777" stroke-width="1.3"/></svg>
<div class="pl" style="left:558px;top:731px">hci [W/(m²·K)]</div>
<div class="vv" style="left:742px;top:730px;height:13px;background:#d8d8d8"></div>
<div class="pl" style="left:745px;top:731px">hce [W/(m²·K)]</div>
<div class="pv" style="left:934px;top:730px">2.500</div>
<div class="vv" style="left:1160px;top:730px;height:13px;background:#d8d8d8"></div>
<div class="pv" style="left:1165px;top:730px">8.400</div>
<div class="pc" style="left:537px;top:748px">Coefficienti di scambio termico radiativo</div>
<svg class="a" style="left:1371px;top:751px" width="16" height="9"><path d="M1 8L8 1.5L15 8" fill="none" stroke="#777" stroke-width="1.3"/></svg>
<div class="a" style="left:1391px;top:383px;width:10px;height:383px;background:#f0f0f0"></div>
<div class="a" style="left:1391px;top:383px;width:11px;height:256px;background:#fff;border:1px solid #a8a8a8"></div>
<div class="a" style="left:1391px;top:383px;width:11px;height:16px;background:#fff;border:1px solid #a8a8a8;border-bottom-width:2px"></div>
<svg class="a" style="left:1395px;top:388px" width="7" height="5"><path d="M0 4H7L3.5 0Z" fill="#666"/></svg>
<div class="a" style="left:1391px;top:752px;width:11px;height:15px;background:#fff;border:1px solid #a8a8a8"></div>
<svg class="a" style="left:1395px;top:758px" width="7" height="5"><path d="M0 0H7L3.5 4Z" fill="#666"/></svg>
</body></html>
